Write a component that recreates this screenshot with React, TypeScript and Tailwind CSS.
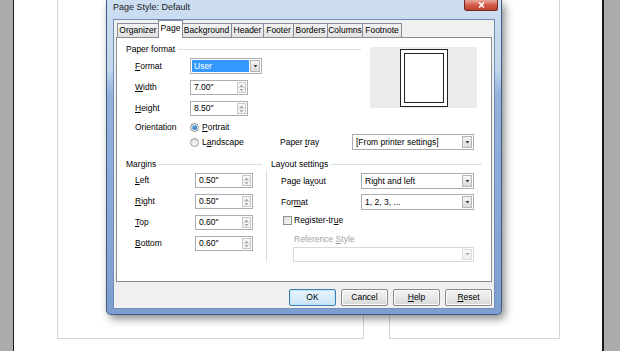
import React from 'react';

function U({ children }: { children: React.ReactNode }) {
  return <span className="underline underline-offset-[1px]">{children}</span>;
}

function Arrow({ up, gray }: { up?: boolean; gray?: boolean }) {
  return (
    <svg width="5" height="3" viewBox="0 0 5 3" className="block">
      <path d={up ? 'M0.5 3 L2.5 0.5 L4.5 3 Z' : 'M0.5 0 L4.5 0 L2.5 2.5 Z'} fill={gray ? '#a8a8a8' : '#3a3a3a'} />
    </svg>
  );
}

function Spin({ value }: { value: string }) {
  return (
    <div className="flex h-[15px] w-[58px] border border-[#abadb3] bg-white">
      <span className="flex-1 pl-[3px] leading-[13px]">{value}</span>
      <div className="m-[1px] flex w-[9px] flex-col border border-[#c8c8c8] bg-[#f6f6f6]">
        <div className="flex flex-1 items-center justify-center border-b border-[#dadada]">
          <Arrow up gray />
        </div>
        <div className="flex flex-1 items-center justify-center">
          <Arrow gray />
        </div>
      </div>
    </div>
  );
}

function Select({
  value,
  className,
  highlight,
  disabled,
}: {
  value: string;
  className: string;
  highlight?: boolean;
  disabled?: boolean;
}) {
  return (
    <div
      className={`flex items-stretch border bg-white p-[1px] ${
        disabled ? 'border-[#d9d9d9]' : 'border-[#abadb3]'
      } ${className}`}
    >
      <span
        className={`flex flex-1 items-center pl-[2px] ${highlight ? 'bg-[#3399ff] text-white' : ''}`}
      >
        {value}
      </span>
      <div
        className={`ml-[1px] flex w-[10px] items-center justify-center border bg-gradient-to-b ${
          disabled
            ? 'border-[#dcdcdc] from-[#f7f7f7] to-[#efefef]'
            : 'border-[#b5b5b5] from-[#f6f6f6] to-[#dadada]'
        }`}
      >
        <Arrow gray={disabled} />
      </div>
    </div>
  );
}

function Header({ title, className }: { title: string; className: string }) {
  return (
    <div className={`flex h-[12px] items-center ${className}`}>
      <span>{title}</span>
      <div className="ml-[3px] h-px flex-1 bg-[#d5dfe5]" />
    </div>
  );
}

const tabs = [
  { label: 'Organizer', w: 'w-[42px]' },
  { label: 'Page', w: 'w-[25px]', active: true },
  { label: 'Background', w: 'w-[51px]' },
  { label: 'Header', w: 'w-[33px]' },
  { label: 'Footer', w: 'w-[31px]' },
  { label: 'Borders', w: 'w-[35px]' },
  { label: 'Columns', w: 'w-[36px]' },
  { label: 'Footnote', w: 'w-[40px]' },
];

export default function App() {
  return (
    <div className="relative flex h-[351px] w-[620px] overflow-hidden bg-white font-['Liberation_Sans',Arial,sans-serif] text-[8.5px] text-black">
      {/* document background */}
      <div className="w-[13px] bg-[#ababab]" />
      <div className="w-[1px] bg-[#1a1a1a]" />
      <div className="flex flex-1 items-start pl-[43px]">
        <div className="h-[339px] w-[307px] border-x border-b border-[#d4d4d4]" />
        <div className="ml-[25px] h-[339px] w-[171px] border-x border-b border-[#d4d4d4]" />
      </div>
      <div className="w-[2px] bg-[#1a1a1a]" />
      <div className="w-[16px] bg-[#ababab]" />

      {/* dialog window */}
      <div className="absolute left-[106px] top-0 flex h-[315px] w-[396px] flex-col rounded-b-[5px] border border-t-0 border-[#3d5c86] bg-[linear-gradient(180deg,#cddef2_0%,#c3d6ed_22%,#93b2dc_30%,#7d9fd0_100%)] px-[6px] pb-[5px] shadow-[3px_4px_8px_rgba(0,0,0,0.45)]">
        <div className="flex h-[19px] shrink-0 items-center pb-[3px] text-[9px]">
          <span className="text-[#1b1b1b]">Page Style: Default</span>
        </div>
        <div className="absolute right-[3px] top-0 flex h-[11px] w-[34px] items-center justify-center rounded-b-[3px] border border-t-0 border-[#6b2a22] bg-gradient-to-b from-[#e8a79d] via-[#d25b48] to-[#c2402c]">
          <svg width="7" height="6" viewBox="0 0 7 6">
            <path d="M1 0.5 L6 5.5 M6 0.5 L1 5.5" stroke="#fff" strokeWidth="1.6" />
          </svg>
        </div>

        {/* client area */}
        <div className="flex flex-1 flex-col border border-[#6f8db7] bg-[#f0f0f0]">
          {/* tabs */}
          <div className="flex h-[17px] shrink-0 items-end pl-[3px]">
            {tabs.map((t) =>
              t.active ? (
                <div
                  key={t.label}
                  className={`relative z-10 -mx-[1px] -mb-px flex h-[18px] items-center justify-center border border-b-0 border-[#898c95] bg-white pb-[2px] ${t.w}`}
                >
                  {t.label}
                </div>
              ) : (
                <div
                  key={t.label}
                  className={`-ml-px flex h-[14px] items-center justify-center border border-b-0 border-[#898c95] bg-gradient-to-b from-[#f2f2f2] to-[#e3e3e3] first:ml-0 ${t.w}`}
                >
                  {t.label}
                </div>
              )
            )}
          </div>

          {/* tab page */}
          <div className="ml-[2px] flex h-[245px] w-[376px] shrink-0 flex-col border border-[#898c95] bg-white pl-[9px]">
            <div className="mt-[5px] flex">
              <div className="flex w-[235px] flex-col">
                <Header title="Paper format" className="" />
                <div className="mt-[3px] flex h-[16px] items-center pl-[9px]">
                  <span className="w-[55px]">
                    <U>F</U>ormat
                  </span>
                  <Select value="User" highlight className="h-[16px] w-[72px]" />
                </div>
                <div className="mt-[6px] flex h-[15px] items-center pl-[9px]">
                  <span className="w-[55px]">
                    <U>W</U>idth
                  </span>
                  <Spin value={'7.00"'} />
                </div>
                <div className="mt-[6px] flex h-[15px] items-center pl-[9px]">
                  <span className="w-[55px]">
                    <U>H</U>eight
                  </span>
                  <Spin value={'8.50"'} />
                </div>
              </div>
              <div className="ml-[9px] mt-[4px] flex h-[61px] w-[107px] justify-center bg-[#ececec] pt-[2px]">
                <div className="h-[58px] w-[48px] border border-[#222] bg-white p-[3px]">
                  <div className="h-full w-full border border-[#222]" />
                </div>
              </div>
            </div>

            <div className="mt-[4px] flex h-[14px] items-center pl-[9px]">
              <span className="w-[55px]">Orientation</span>
              <div className="flex items-center">
                <div className="flex h-[9px] w-[9px] items-center justify-center rounded-full border border-[#8e8f8f] bg-gradient-to-b from-[#e6e6e6] to-[#fafafa]">
                  <div className="h-[5px] w-[5px] rounded-full bg-gradient-to-br from-[#7fc4f3] to-[#1d6ab3]" />
                </div>
                <span className="ml-[3px]">
                  <U>P</U>ortrait
                </span>
              </div>
            </div>

            <div className="flex h-[16px] items-center pl-[9px]">
              <div className="flex w-[145px] items-center pl-[55px]">
                <div className="h-[9px] w-[9px] rounded-full border border-[#9a9a9a] bg-gradient-to-b from-[#e0e0e0] to-[#fafafa]" />
                <span className="ml-[3px]">
                  L<U>a</U>ndscape
                </span>
              </div>
              <span className="w-[72px]">
                Paper <U>t</U>ray
              </span>
              <Select value="[From printer settings]" className="h-[16px] w-[122px]" />
            </div>

            <div className="mt-[8px] flex">
              <div className="flex w-[136px] flex-col">
                <Header title="Margins" className="" />
                {[
                  ['L', 'eft', '0.50"'],
                  ['R', 'ight', '0.50"'],
                  ['T', 'op', '0.60"'],
                  ['B', 'ottom', '0.60"'],
                ].map(([k, rest, v], i) => (
                  <div
                    key={k}
                    className={`flex h-[15px] items-center pl-[9px] ${i === 0 ? 'mt-[3px]' : 'mt-[6px]'}`}
                  >
                    <span className="w-[60px]">
                      <U>{k}</U>
                      {rest}
                    </span>
                    <Spin value={v} />
                  </div>
                ))}
              </div>

              <div className="ml-[4px] flex w-[216px] flex-col">
                <Header title="Layout settings" className="pl-[5px]" />
                <div className="flex h-[92px] flex-col border-l border-[#d5dfe5] pl-[14px]">
                  <div className="mt-[3px] flex h-[16px] items-center">
                    <span className="w-[80px]">
                      Page la<U>y</U>out
                    </span>
                    <Select value="Right and left" className="h-[16px] w-[113px]" />
                  </div>
                  <div className="mt-[5px] flex h-[16px] items-center">
                    <span className="w-[80px]">
                      For<U>m</U>at
                    </span>
                    <Select value="1, 2, 3, ..." className="h-[16px] w-[113px]" />
                  </div>
                  <div className="mt-[4px] flex h-[12px] items-center pl-[2px]">
                    <div className="h-[9px] w-[9px] border border-[#8f8f8f] bg-gradient-to-br from-[#dcdcdc] to-[#fbfbfb]" />
                    <span className="ml-[2px]">
                      Register-tr<U>u</U>e
                    </span>
                  </div>
                  <div className="mt-[7px] flex h-[12px] items-center pl-[13px] text-[#a3a3a3]">
                    <span>
                      Reference <U>S</U>tyle
                    </span>
                  </div>
                  <div className="ml-[12px] mt-[2px]">
                    <Select value="" disabled className="h-[15px] w-[181px]" />
                  </div>
                </div>
              </div>
            </div>
          </div>

          {/* buttons */}
          <div className="mt-[7px] flex justify-end gap-[5px] pr-[2px]">
            {[
              { label: <>OK</>, focus: true },
              { label: <>Cancel</> },
              { label: <><U>H</U>elp</> },
              { label: <><U>R</U>eset</> },
            ].map((b, i) => (
              <div
                key={i}
                className={`flex h-[17px] w-[47px] items-center justify-center rounded-[2px] border ${
                  b.focus
                    ? 'border-[#3c7fb1] bg-gradient-to-b from-[#eaf6fd] to-[#c9e4f6] shadow-[inset_0_0_0_1px_#bfe3f9]'
                    : 'border-[#8a8a8a] bg-gradient-to-b from-[#f4f4f4] via-[#e8e8e8] to-[#d6d6d6] shadow-[inset_0_0_0_1px_#fcfcfc]'
                }`}
              >
                {b.label}
              </div>
            ))}
          </div>
        </div>
      </div>
    </div>
  );
}
